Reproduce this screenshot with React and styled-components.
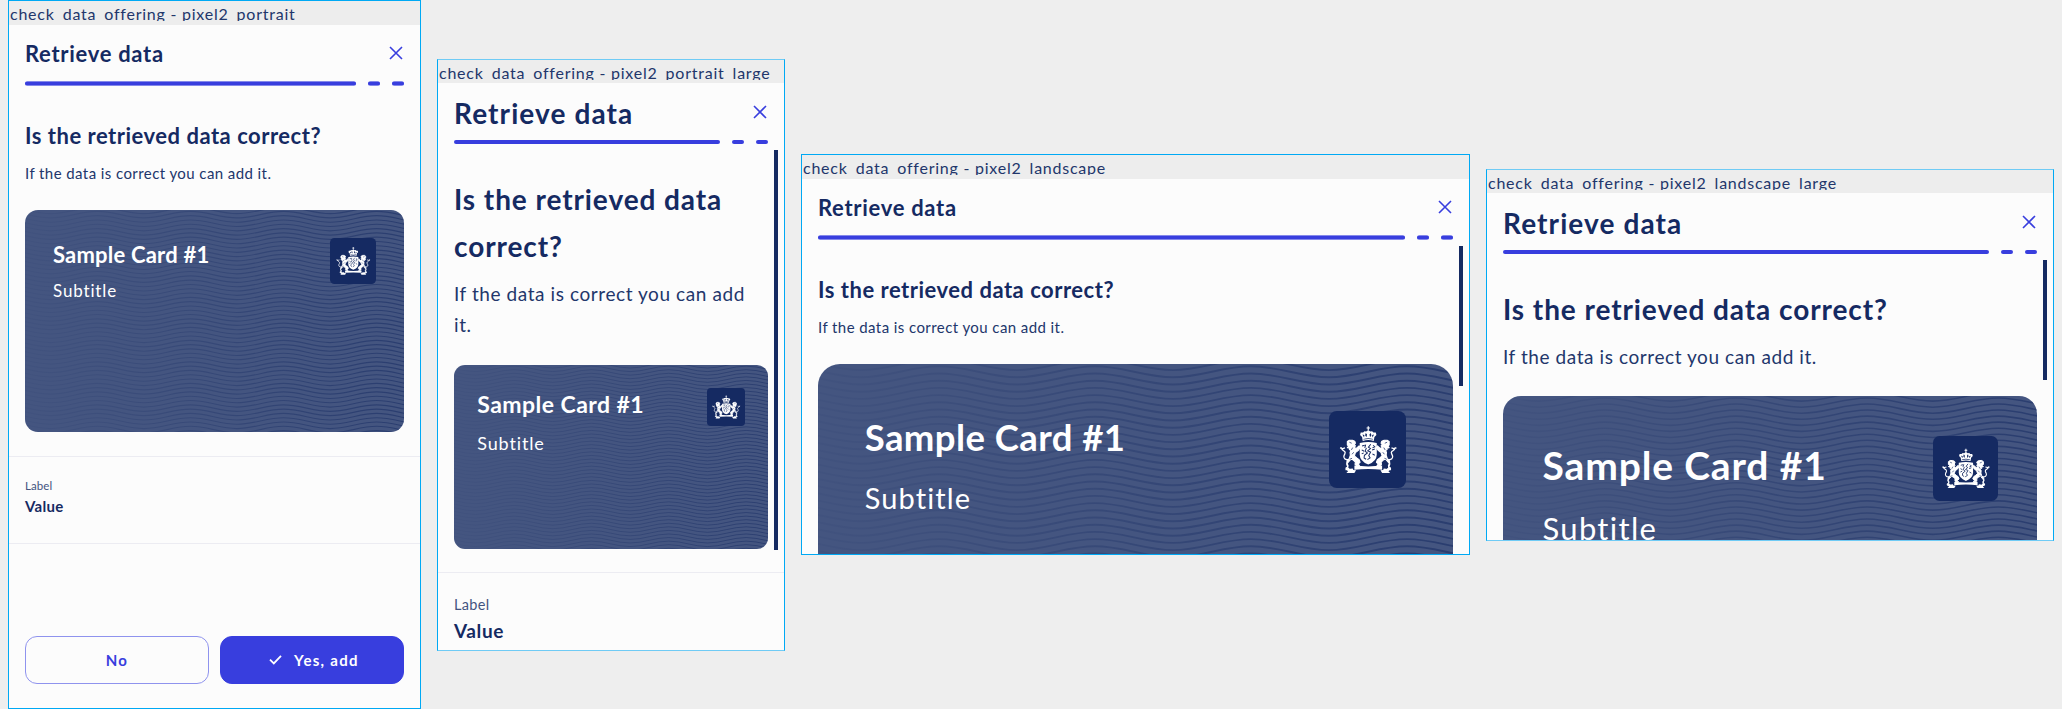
import React from "react";
import styled, { createGlobalStyle } from "styled-components";

const GlobalStyle = createGlobalStyle`
  * { box-sizing: border-box; }
  body { margin: 0; background: #eeeeee; }
`;

const color = {
  ink: "#152a62",
  text: "#22366b",
  accent: "#383ede",
  surface: "#fcfcfc",
  band: "#ededed",
  outline: "#00a9f4",
  card: "#445580",
  divider: "#ececf2",
};

const SIZES = {
  regular: {
    header: 56, title: 22, titleGap: 0.7, titleShift: 3, bar: 5, top: 32,
    heading: 22, headingGap: 0.51, headingLine: 36,
    body: 15, bodyGap: 0.42, bodyLine: 24, bodyTop: 7, cardGap: 25,
    label: 11.5, labelGap: 0.1, labelLine: 16,
    value: 15, valueGap: 0.3, valueLine: 24,
  },
  large: {
    header: 57, title: 28, titleGap: 1.1, titleShift: 4, bar: 4, top: 32,
    heading: 28, headingGap: 0.92, headingLine: 47,
    body: 19, bodyGap: 0.58, bodyLine: 31.3, bodyTop: 8, cardGap: 24,
    label: 14.5, labelGap: 0.3, labelLine: 21,
    value: 19, valueGap: 0.6, valueLine: 31,
  },
};

const Board = styled.main`
  display: flex;
  align-items: flex-start;
  gap: 16px;
  width: 2062px;
  height: 709px;
  padding-left: 8px;
  overflow: hidden;
  background: #eeeeee;
  color: ${color.ink};
  font-family: Lato, "Open Sans", sans-serif;
`;

const Frame = styled.section`
  position: relative;
  display: flex;
  flex-direction: column;
  flex: none;
  width: ${(p) => p.$width}px;
  height: ${(p) => p.$height}px;
  margin-top: ${(p) => p.$top}px;
  border: 1px solid ${color.outline};
  border-top-color: ${(p) => (p.$soft ? "#6fcbf5" : color.outline)};
  border-bottom-color: ${(p) => (p.$soft ? "#6fcbf5" : color.outline)};
  background: ${color.surface};
  overflow: hidden;
`;

const Band = styled.div`
  flex: none;
  height: ${(p) => (p.$soft ? 23 : 24)}px;
  background: ${color.band};
`;

const Name = styled.div`
  height: 20px;
  padding-left: 1px;
  overflow: hidden;
  white-space: nowrap;
  color: ${color.text};
  font-size: 16px;
  line-height: 26px;
  letter-spacing: 0.76px;
`;

const Header = styled.header`
  flex: none;
  display: flex;
  align-items: center;
  justify-content: space-between;
  height: ${(p) => p.$s.header}px;
  padding: 0 16px;
`;

const Title = styled.h1`
  margin: 0;
  padding-top: ${(p) => p.$s.titleShift}px;
  font-size: ${(p) => p.$s.title}px;
  line-height: 1.3;
  font-weight: 700;
  letter-spacing: ${(p) => p.$s.titleGap}px;
`;

const CloseIcon = styled.svg`
  display: block;
  width: 16px;
  height: 16px;
  fill: none;
  stroke: ${color.accent};
  stroke-width: 1.6;
`;

const Progress = styled.div`
  flex: none;
  display: flex;
  gap: 12px;
  padding: 0 16px;
`;

const Step = styled.span`
  flex: ${(p) => (p.$active ? "1" : "0 0 12px")};
  height: ${(p) => p.$height}px;
  border-radius: 3px;
  background: ${(p) =>
    p.$height === 5
      ? `linear-gradient(#8488ea 1px, ${color.accent} 1px 4px, #8488ea 4px)`
      : color.accent};
`;

const Scrollbar = styled.div`
  position: absolute;
  top: ${(p) => p.$top}px;
  right: 6px;
  width: 4px;
  height: ${(p) => p.$height}px;
  background: ${color.ink};
`;

const Content = styled.div`
  flex: none;
  padding: ${(p) => p.$s.top}px 16px 0;
`;

const Heading = styled.h2`
  margin: 0 0 ${(p) => p.$s.bodyTop}px;
  font-size: ${(p) => p.$s.heading}px;
  line-height: ${(p) => p.$s.headingLine}px;
  font-weight: 700;
  letter-spacing: ${(p) => p.$s.headingGap}px;
`;

const Body = styled.p`
  margin: 0 0 ${(p) => p.$s.cardGap}px;
  padding-right: 10px;
  color: ${color.text};
  font-size: ${(p) => p.$s.body}px;
  line-height: ${(p) => p.$s.bodyLine}px;
  letter-spacing: ${(p) => p.$s.bodyGap}px;
`;

const CardBox = styled.article`
  display: grid;
  height: ${(p) => p.$c.height}px;
  border-radius: ${(p) => p.$c.radius}px;
  background: ${color.card};
  color: #fff;
  overflow: hidden;
  > * { grid-area: 1 / 1; }
`;

const CardWaves = styled.svg`
  width: 100%;
  height: 100%;
  fill: none;
  stroke-width: 1.9;
`;

const CardBody = styled.div`
  z-index: 1;
  display: flex;
  justify-content: space-between;
  align-items: flex-start;
  padding: ${(p) => p.$c.pad}px ${(p) => p.$c.pad}px 0;
`;

const CardTitle = styled.h3`
  margin: 0 0 ${(p) => p.$c.gap}px;
  font-size: ${(p) => p.$c.title}px;
  line-height: ${(p) => p.$c.titleLine}px;
  font-weight: 700;
  letter-spacing: ${(p) => p.$c.titleGap}px;
  white-space: nowrap;
`;

const CardSubtitle = styled.p`
  margin: 0;
  font-size: ${(p) => p.$c.sub}px;
  line-height: ${(p) => p.$c.subLine}px;
  letter-spacing: ${(p) => p.$c.subGap}px;
`;

const Badge = styled.svg`
  flex: none;
  width: ${(p) => p.$size}px;
  height: ${(p) => p.$size}px;
  border-radius: ${(p) => p.$size * 0.1}px;
  background: ${color.ink};
`;

const Attribute = styled.dl`
  flex: none;
  margin: ${(p) => p.$gap}px 0 0;
  padding: 21px 16px 25px;
  border: solid ${color.divider};
  border-width: 1px 0;
`;

const Label = styled.dt`
  color: ${color.text};
  font-size: ${(p) => p.$s.label}px;
  line-height: ${(p) => p.$s.labelLine}px;
  letter-spacing: ${(p) => p.$s.labelGap}px;
  opacity: 0.85;
`;

const Value = styled.dd`
  margin: 0;
  font-size: ${(p) => p.$s.value}px;
  line-height: ${(p) => p.$s.valueLine}px;
  font-weight: 700;
  letter-spacing: ${(p) => p.$s.valueGap}px;
`;

const Actions = styled.footer`
  display: grid;
  grid-template-columns: 1fr 1fr;
  gap: 11px;
  margin-top: auto;
  padding: 0 16px 24px;
`;

const Button = styled.button`
  display: flex;
  align-items: center;
  justify-content: center;
  gap: 12px;
  height: 48px;
  padding: 0 0 1px ${(p) => (p.$primary ? 4 : 0)}px;
  border: 1px solid ${(p) => (p.$primary ? color.accent : "#8f93ee")};
  border-radius: 12px;
  background: ${(p) => (p.$primary ? color.accent : color.surface)};
  color: ${(p) => (p.$primary ? "#fff" : color.accent)};
  font: 700 15px/24px Lato, "Open Sans", sans-serif;
  letter-spacing: 1.3px;
`;

const CheckIcon = styled.svg`
  width: 13px;
  height: 11px;
  fill: none;
  stroke: currentColor;
  stroke-width: 1.8;
`;

const HALF = 78;
const AMPLITUDE = 11;
const wave = (y) => {
  let x = -35;
  let d = `M${x} ${y}`;
  for (let i = 0; i < 9; i += 1) {
    const from = i % 2 ? y + AMPLITUDE : y;
    const to = i % 2 ? y : y + AMPLITUDE;
    d += `C${x + HALF * 0.36} ${from} ${x + HALF * 0.64} ${to} ${x + HALF} ${to}`;
    x += HALF;
  }
  return d;
};
const WAVES = Array.from({ length: 55 }, (_, k) => wave(+(2.3 + (k - 2) * 7.2).toFixed(1)));

function Waves({ id }) {
  return (
    <CardWaves viewBox="0 0 635 371" preserveAspectRatio="xMinYMin slice" aria-hidden="true">
      <defs>
        <linearGradient id={id} gradientUnits="userSpaceOnUse" x1="0" y1="0" x2="635" y2="0">
          <stop offset="0" stopColor={color.ink} stopOpacity="0.06" />
          <stop offset="1" stopColor={color.ink} stopOpacity="0.55" />
        </linearGradient>
      </defs>
      <path d={WAVES.join("")} stroke={`url(#${id})`} />
    </CardWaves>
  );
}

function Lion() {
  return (
    <g>
      <path
        fill="#fff"
        stroke="#fff"
        strokeWidth="3.5"
        strokeLinejoin="round"
        d="M31 57l6-4 9 0 7 3 2 6-4 3 4 5-4 4 6 4 9-8 3 5-5 8-9 7-3 10 7 6 7 5 3 8-6 5 4 5-8 1-5-5 1-7-8-7-6-1-6 7-5 6 3 6-1 7 4 3-2 2H27l0-5 5-3-3-9 1-9 7-8 3-9-1-9 3-5-5-3 1-4-7-2 4-4-4-4z"
      />
      <path fill="none" stroke="#fff" strokeWidth="4" d="M34 111c-9 2-16-4-13-12 2-5 6-8 2-12-4-3-8-4-11-12M9 76l8 2 7-2" />
      <path fill="none" stroke={color.ink} strokeWidth="2.2" d="M37 59l7 3M47 75l-4 7M50 89l-5 6M38 110l7-3" />
    </g>
  );
}

function CoatOfArms({ size }) {
  return (
    <Badge $size={size} viewBox="-24 -34.5 232 232" role="img">
      <Lion />
      <g transform="translate(187 0) scale(-1 1)">
        <Lion />
      </g>
      <path fill="none" stroke="#fff" strokeWidth="3.5" d="M93.5 11v13M88.5 16.5h10" />
      <path
        fill="#fff"
        d="M77 55l-2-12-6-6 2-7 7 0 4-4 5 1 6.5-4 6.5 4 5-1 4 4 7 0 2 7-6 6-2 12q-16.5-5-33 0z"
      />
      <path fill={color.ink} d="M76 36l6 1-1 8zM86 31l4 5-2 8-4-6zM101 31l-4 5 2 8 4-6zM111 36l-6 1 1 8zM79 49q14.5-4 29 0v2q-14.5-4-29 0z" />
      <path fill="#fff" d="M68 61q25.5-5 51 0v35q0 20-25.5 30-25.5-10-25.5-30z" />
      <path
        fill="none"
        stroke={color.ink}
        strokeWidth="3"
        d="M75 70l8-2M74 82l7 4M74 94l6-3M86 66l-3 10M108 68l5 5-7 3M101 65l-7 9 6 4-8 7 10 4M88 76l-4 10 7 5-9 7-1 8 6 4M100 90l-5 9 4 7-8 5M105 82l8-3M106 94l7 4"
      />
      <path fill="#fff" d="M52 129q41.5 5 83 0v12q-41.5-4-83 0z" />
      <path fill="#fff" d="M27 140l20-2 2 4 8 1-5 8H28l5-5zM160 140l-20-2-2 4-8 1 5 8h24l-5-5z" />
    </Badge>
  );
}

function Preview({ name, id, top, width, height, size, soft, scroll, card, attribute, actions }) {
  const s = SIZES[size];
  return (
    <Frame $width={width} $height={height} $top={top} $soft={soft}>
      <Band $soft={soft}>
        <Name>{name}</Name>
      </Band>
      <Header $s={s}>
        <Title $s={s}>Retrieve data</Title>
        <CloseIcon viewBox="0 0 16 16" aria-label="Close">
          <path d="M2 2l12 12M14 2L2 14" />
        </CloseIcon>
      </Header>
      <Progress>
        <Step $active $height={s.bar} />
        <Step $height={s.bar} />
        <Step $height={s.bar} />
      </Progress>
      {scroll && <Scrollbar $top={soft ? 90 : 91} $height={scroll} />}
      <Content $s={s}>
        <Heading $s={s}>Is the retrieved data correct?</Heading>
        <Body $s={s}>If the data is correct you can add it.</Body>
        <CardBox $c={card}>
          <Waves id={id} />
          <CardBody $c={card}>
            <div>
              <CardTitle $c={card}>Sample Card #1</CardTitle>
              <CardSubtitle $c={card}>Subtitle</CardSubtitle>
            </div>
            <CoatOfArms size={card.badge} />
          </CardBody>
        </CardBox>
      </Content>
      {attribute && (
        <Attribute $gap={soft ? 23 : 24}>
          <Label $s={s}>Label</Label>
          <Value $s={s}>Value</Value>
        </Attribute>
      )}
      {actions && (
        <Actions>
          <Button>No</Button>
          <Button $primary>
            <CheckIcon viewBox="0 0 13 11">
              <path d="M1 5.6l3.8 3.8L12 1.8" />
            </CheckIcon>
            Yes, add
          </Button>
        </Actions>
      )}
    </Frame>
  );
}

const PREVIEWS = [
  {
    id: "portrait", name: "check_data_offering - pixel2_portrait",
    top: 0, width: 413, height: 709, size: "regular", attribute: true, actions: true,
    card: { height: 221.5, radius: 13, pad: 28, badge: 46, title: 22, titleLine: 33, titleGap: 0.2, gap: 8, sub: 17, subLine: 24, subGap: 0.85 },
  },
  {
    id: "portrait-large", name: "check_data_offering - pixel2_portrait_large",
    top: 59, width: 348, height: 592, size: "large", soft: true, scroll: 400, attribute: true,
    card: { height: 184, radius: 11, pad: 23.3, badge: 38, title: 23, titleLine: 33, titleGap: 0.45, gap: 9.5, sub: 18, subLine: 27, subGap: 0.85 },
  },
  {
    id: "landscape", name: "check_data_offering - pixel2_landscape",
    top: 154, width: 669, height: 401, size: "regular", scroll: 140,
    card: { height: 371, radius: 22, pad: 46.7, badge: 77.5, title: 36.5, titleLine: 53, titleGap: 0.42, gap: 14.5, sub: 29, subLine: 40, subGap: 1.1 },
  },
  {
    id: "landscape-large", name: "check_data_offering - pixel2_landscape_large",
    top: 169, width: 568, height: 372, size: "large", soft: true, scroll: 120,
    card: { height: 312, radius: 18, pad: 39.5, badge: 65, title: 39, titleLine: 59, titleGap: 0.85, gap: 11.5, sub: 31, subLine: 44, subGap: 1.3 },
  },
];

export default function App() {
  return (
    <>
      <GlobalStyle />
      <Board>
        {PREVIEWS.map((p) => (
          <Preview key={p.id} {...p} />
        ))}
      </Board>
    </>
  );
}
